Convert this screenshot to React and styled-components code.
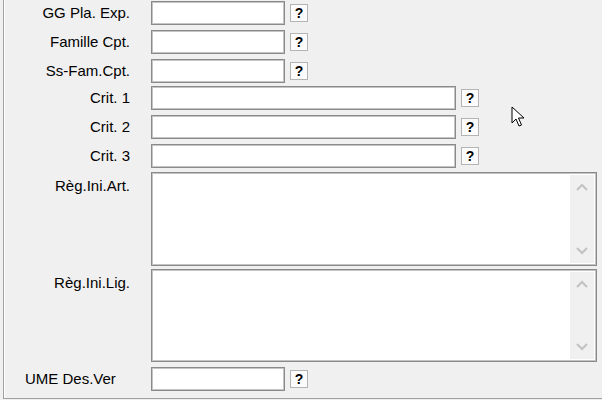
import React from 'react';
import styled, { createGlobalStyle } from 'styled-components';

const GlobalStyle = createGlobalStyle`
  html, body {
    margin: 0;
    padding: 0;
    background: #f0f0f0;
  }
  body {
    font-family: "Liberation Sans", Arial, sans-serif;
  }
`;

const Screen = styled.div`
  position: relative;
  width: 602px;
  height: 400px;
  overflow: hidden;
  background: #f0f0f0;
`;

const Panel = styled.div`
  margin-left: 3px;
  width: 610px;
  height: 399px;
  border-left: 1px solid #a0a0a0;
  border-bottom: 1px solid #a0a0a0;
  box-shadow: inset 1px 0 0 #ffffff;
  box-sizing: border-box;
`;

// row heights follow the original dialog's uneven spacing
const Form = styled.div`
  display: grid;
  grid-template-columns: 126px 446px;
  grid-template-rows: 29px 29px 27px 29px 29px 28px 97px 98px 24px;
  column-gap: 21px;
  padding-top: 1px;
`;

const Label = styled.div`
  font-size: 15px;
  line-height: 24px;
  color: #000;
  text-align: ${({ $align }) => $align || 'right'};
  padding-left: ${({ $align }) => ($align === 'left' ? '21px' : '0')};
  padding-top: ${({ $top }) => ($top ? '2px' : '0')};
  white-space: nowrap;
`;

const Field = styled.div`
  display: flex;
  align-items: center;
  gap: 5px;
  align-self: start;
`;

const Input = styled.div`
  width: ${({ $w }) => $w}px;
  height: 24px;
  box-sizing: border-box;
  background: #fff;
  border: 1px solid #8a8a8a;
  box-shadow: inset 0 0 0 1px #c4c4c4;
`;

const HelpButton = styled.div`
  width: 18px;
  height: 18px;
  box-sizing: border-box;
  border: 1px solid #b4b4b4;
  background: #fbfbfb;
  display: flex;
  align-items: center;
  justify-content: center;
  font-family: "Liberation Sans", Arial, sans-serif;
  font-weight: bold;
  font-size: 14px;
  color: #000;
`;

const TextArea = styled.div`
  height: ${({ $h }) => $h}px;
  box-sizing: border-box;
  background: #fff;
  border: 1px solid #8a8a8a;
  box-shadow: inset 0 0 0 1px #c4c4c4;
  display: flex;
  justify-content: flex-end;
  padding: 2px;
`;

const ScrollBar = styled.div`
  width: 24px;
  background: #f0f0f0;
  display: flex;
  flex-direction: column;
  justify-content: space-between;
  align-items: center;
  padding: 8px 0;
`;

const Pointer = styled.svg`
  position: absolute;
  left: 511px;
  top: 106px;
`;

const Chevron = ({ up }) => (
  <svg width="12" height="8" viewBox="0 0 12 8">
    <path
      d={up ? 'M1 7 L6 2 L11 7' : 'M1 1 L6 6 L11 1'}
      fill="none"
      stroke="#c2c2c2"
      strokeWidth="2"
    />
  </svg>
);

const rows = [
  { label: 'GG Pla. Exp.', w: 134 },
  { label: 'Famille Cpt.', w: 134 },
  { label: 'Ss-Fam.Cpt.', w: 134 },
  { label: 'Crit. 1', w: 305 },
  { label: 'Crit. 2', w: 305 },
  { label: 'Crit. 3', w: 305 },
];

const App = () => (
  <Screen>
    <GlobalStyle />
    <Panel>
      <Form>
        {rows.map((r) => (
          <React.Fragment key={r.label}>
            <Label>{r.label}</Label>
            <Field>
              <Input $w={r.w} />
              <HelpButton>?</HelpButton>
            </Field>
          </React.Fragment>
        ))}
        <Label $top>Règ.Ini.Art.</Label>
        <TextArea $h={94}>
          <ScrollBar>
            <Chevron up />
            <Chevron />
          </ScrollBar>
        </TextArea>
        <Label $top>Règ.Ini.Lig.</Label>
        <TextArea $h={93}>
          <ScrollBar>
            <Chevron up />
            <Chevron />
          </ScrollBar>
        </TextArea>
        <Label $align="left">UME Des.Ver</Label>
        <Field>
          <Input $w={134} />
          <HelpButton>?</HelpButton>
        </Field>
      </Form>
    </Panel>
    <Pointer width="14" height="22" viewBox="0 0 14 22">
      <path
        d="M1 1 L1 17 L5 13 L8 20 L10.5 19 L7.5 12 L13 12 Z"
        fill="#fff"
        stroke="#000"
        strokeWidth="1"
        strokeLinejoin="miter"
      />
    </Pointer>
  </Screen>
);

export default App;
